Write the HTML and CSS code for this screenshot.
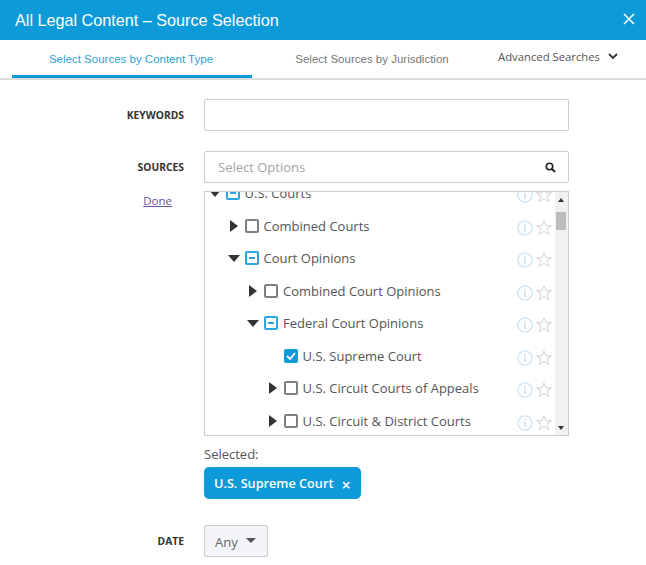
FILE: index.html
```html
<!DOCTYPE html>
<html lang="en">
<head>
  <meta charset="UTF-8">
  <title>All Legal Content – Source Selection</title>
  <link rel="stylesheet" href="styles.css">
</head>
<body>
  <svg class="defs" width="0" height="0">
    <symbol id="info" viewBox="0 0 17 17">
      <circle cx="8.5" cy="8.5" r="7.5" fill="none" stroke="#cfe3f2" stroke-width="1.3"/>
      <circle cx="8.5" cy="5" r="1" fill="#cfe3f2"/>
      <rect x="7.6" y="7" width="1.8" height="6" fill="#cfe3f2"/>
    </symbol>
    <symbol id="star" viewBox="0 0 17 17">
      <path d="M8.5 1.2l2.2 5h5.3l-4.2 3.4 1.6 5.5-4.9-3.1-4.9 3.1 1.6-5.5L1 6.2h5.3z" fill="none" stroke="#d6d6d6" stroke-width="1.1"/>
    </symbol>
  </svg>

  <header class="titlebar">
    <h1>All Legal Content – Source Selection</h1>
    <svg class="close" width="12" height="12" viewBox="0 0 12 12"><path d="M1 1l10 10M11 1L1 11" stroke="#fff" stroke-width="1.6"/></svg>
  </header>

  <nav class="tabs">
    <a class="tab active">Select Sources by Content Type</a>
    <a class="tab">Select Sources by Jurisdiction</a>
    <a class="advanced">Advanced Searches
      <svg width="10" height="7" viewBox="0 0 10 7"><path d="M1 1l4 4 4-4" fill="none" stroke="#333" stroke-width="1.8"/></svg>
    </a>
  </nav>

  <main class="form">
    <div class="row keywords">
      <label class="label">KEYWORDS</label>
      <div class="input"></div>
    </div>

    <div class="row sources">
      <label class="label">SOURCES</label>
      <div class="input select">
        <span>Select Options</span>
        <svg width="11" height="11" viewBox="0 0 11 11"><circle cx="4.5" cy="4.5" r="3.2" fill="none" stroke="#222" stroke-width="1.6"/><path d="M7 7l3 3" stroke="#222" stroke-width="2"/></svg>
      </div>
    </div>

    <div class="row tree-row">
      <a class="done">Done</a>
      <div class="tree">
        <ul class="nodes">
          <li class="node lvl1"><i class="caret open"></i><i class="box part"></i><span>U.S. Courts</span><svg class="info"><use href="#info"/></svg><svg class="star"><use href="#star"/></svg></li>
          <li class="node lvl2"><i class="caret"></i><i class="box"></i><span>Combined Courts</span><svg class="info"><use href="#info"/></svg><svg class="star"><use href="#star"/></svg></li>
          <li class="node lvl2"><i class="caret open"></i><i class="box part"></i><span>Court Opinions</span><svg class="info"><use href="#info"/></svg><svg class="star"><use href="#star"/></svg></li>
          <li class="node lvl3"><i class="caret"></i><i class="box"></i><span>Combined Court Opinions</span><svg class="info"><use href="#info"/></svg><svg class="star"><use href="#star"/></svg></li>
          <li class="node lvl3"><i class="caret open"></i><i class="box part"></i><span>Federal Court Opinions</span><svg class="info"><use href="#info"/></svg><svg class="star"><use href="#star"/></svg></li>
          <li class="node lvl4"><i class="caret none"></i><i class="box checked"><svg width="10" height="8" viewBox="0 0 10 8"><path d="M1 4l3 3 5-6" fill="none" stroke="#fff" stroke-width="1.8"/></svg></i><span>U.S. Supreme Court</span><svg class="info"><use href="#info"/></svg><svg class="star"><use href="#star"/></svg></li>
          <li class="node lvl4"><i class="caret"></i><i class="box"></i><span>U.S. Circuit Courts of Appeals</span><svg class="info"><use href="#info"/></svg><svg class="star"><use href="#star"/></svg></li>
          <li class="node lvl4"><i class="caret"></i><i class="box"></i><span>U.S. Circuit &amp; District Courts</span><svg class="info"><use href="#info"/></svg><svg class="star"><use href="#star"/></svg></li>
        </ul>
        <div class="scrollbar">
          <i class="arrow up"></i>
          <div class="thumb"></div>
          <i class="arrow down"></i>
        </div>
      </div>
    </div>

    <div class="row selected-row">
      <div class="label"></div>
      <div>
        <p class="selected-title">Selected:</p>
        <span class="chip">U.S. Supreme Court <b>×</b></span>
      </div>
    </div>

    <div class="row date-row">
      <label class="label">DATE</label>
      <div class="dropdown">Any <i class="drop-caret"></i></div>
    </div>
  </main>
</body>
</html>
```

FILE: styles.css
```css
html, body {
  margin: 0;
  padding: 0;
  height: 565px;
  overflow: hidden;
}
body {
  font-family: "Open Sans", "Liberation Sans", sans-serif;
  background: white;
  color: #555;
}
.defs {
  position: absolute;
}
.titlebar {
  display: flex;
  justify-content: space-between;
  align-items: center;
  height: 40px;
  padding: 0 11px 0 15px;
  background: #0d9ad9;
}
.titlebar h1 {
  margin: 0;
  font: normal 16.2px "Liberation Sans", Arial, sans-serif;
  color: white;
}
.close {
  margin-bottom: 2px;
}
.tabs {
  display: flex;
  height: 38px;
  padding-left: 12px;
  border-bottom: 2px solid #dcdcdc;
  font: 11.5px "Liberation Sans", Arial, sans-serif;
}
.tab {
  box-sizing: border-box;
  width: 240px;
  height: 36px;
  line-height: 39px;
  text-align: center;
  color: #777;
}
.tab.active {
  height: 38px;
  padding-right: 2px;
  color: #2ba2dc;
  border-bottom: 3px solid #0d9ad9;
}
.advanced {
  display: flex;
  align-items: center;
  gap: 8px;
  height: 32px;
  margin-left: 6px;
  font: 11.3px "Open Sans", sans-serif;
  color: #555;
}
.form {
  padding-top: 19px;
}
.row {
  display: flex;
  gap: 20px;
}
.label {
  width: 184px;
  flex: none;
  text-align: right;
  font-size: 10.3px;
  font-weight: 700;
  line-height: 32px;
  color: #333;
}
.input {
  box-sizing: border-box;
  width: 365px;
  height: 32px;
  background: white;
  border: 1px solid #c9ccd1;
  border-radius: 2px;
}
.sources {
  margin-top: 20px;
}
.select {
  display: flex;
  justify-content: space-between;
  align-items: center;
  padding: 0 12px 0 13px;
  font-size: 13px;
  color: #a3a3a3;
}
.tree-row {
  margin-top: 8px;
}
.done {
  width: 172px;
  flex: none;
  margin-right: 12px;
  text-align: right;
  font-size: 11.5px;
  line-height: 20px;
  color: #6e4fa8;
  text-decoration: underline;
}
.tree {
  box-sizing: border-box;
  display: flex;
  width: 365px;
  height: 245px;
  overflow: hidden;
  border: 1px solid #c9ccd1;
}
.nodes {
  flex: 1;
  margin: -15px 0 0;
  padding: 0;
  list-style: none;
}
.node {
  display: flex;
  align-items: center;
  height: 32.5px;
  font-size: 13px;
  color: #555;
}
.lvl1 { padding-left: 5.5px; }
.lvl2 { padding-left: 24.5px; }
.lvl3 { padding-left: 44px; }
.lvl4 { padding-left: 63.5px; }
.node span {
  flex: 1;
  margin-left: 5px;
}
.caret {
  box-sizing: border-box;
  width: 10px;
  height: 0;
  margin-right: 5px;
  border-style: solid;
  border-width: 6px 0 6px 8px;
  border-color: transparent transparent transparent #333;
}
.caret.open {
  border-width: 7px 6px 0;
  border-color: #333 transparent transparent;
  width: 12px;
  margin-right: 5px;
  margin-left: -2px;
}
.caret.none {
  border-color: transparent;
}
.box {
  box-sizing: border-box;
  display: flex;
  justify-content: center;
  align-items: center;
  width: 14px;
  height: 14px;
  flex: none;
  background: white;
  border: 2px solid #808080;
  border-radius: 2px;
}
.box.part {
  border-color: #2aa5e0;
}
.box.part::after {
  content: "";
  width: 6px;
  height: 2px;
  background: #2aa5e0;
}
.box.checked {
  background: #0d9ad9;
  border-color: #0d9ad9;
}
.info, .star {
  flex: none;
  width: 16px;
  height: 16px;
  margin-top: 4px;
}
.info {
  margin-right: 3px;
}
.star {
  margin-right: 3px;
}
.scrollbar {
  flex: none;
  position: relative;
  width: 13px;
  background: #f1f1f1;
}
.thumb {
  position: absolute;
  top: 20px;
  left: 1px;
  width: 10px;
  height: 18px;
  background: #bcbcbc;
}
.arrow {
  position: absolute;
  left: 3px;
  border-style: solid;
  border-color: transparent;
}
.arrow.up {
  top: 6px;
  border-width: 0 3.5px 4px;
  border-bottom-color: #333;
}
.arrow.down {
  bottom: 5px;
  border-width: 4px 3.5px 0;
  border-top-color: #333;
}
.selected-row {
  margin-top: 9px;
}
.selected-title {
  margin: 0 0 3px;
  font-size: 13px;
  line-height: 19px;
  color: #555;
}
.chip {
  display: flex;
  align-items: center;
  box-sizing: border-box;
  width: 157px;
  height: 32px;
  padding-left: 10px;
  font-size: 12.7px;
  font-weight: 600;
  color: white;
  background: #0d9ad9;
  border-radius: 5px;
}
.chip b {
  margin: 3px 0 0 8px;
  font-size: 16px;
  font-weight: 600;
  line-height: 1;
}
.date-row {
  margin-top: 26px;
}
.date-row .label {
  line-height: 33px;
}
.dropdown {
  box-sizing: border-box;
  display: flex;
  align-items: center;
  gap: 8px;
  width: 64px;
  height: 32px;
  padding: 1px 0 0 10px;
  font-size: 13px;
  color: #666;
  background: #f3f5f9;
  border: 1px solid #c9ccd1;
  border-radius: 2px;
}
.drop-caret {
  margin-top: -3px;
  border-style: solid;
  border-width: 5px 5px 0;
  border-color: #555 transparent transparent;
}
```
